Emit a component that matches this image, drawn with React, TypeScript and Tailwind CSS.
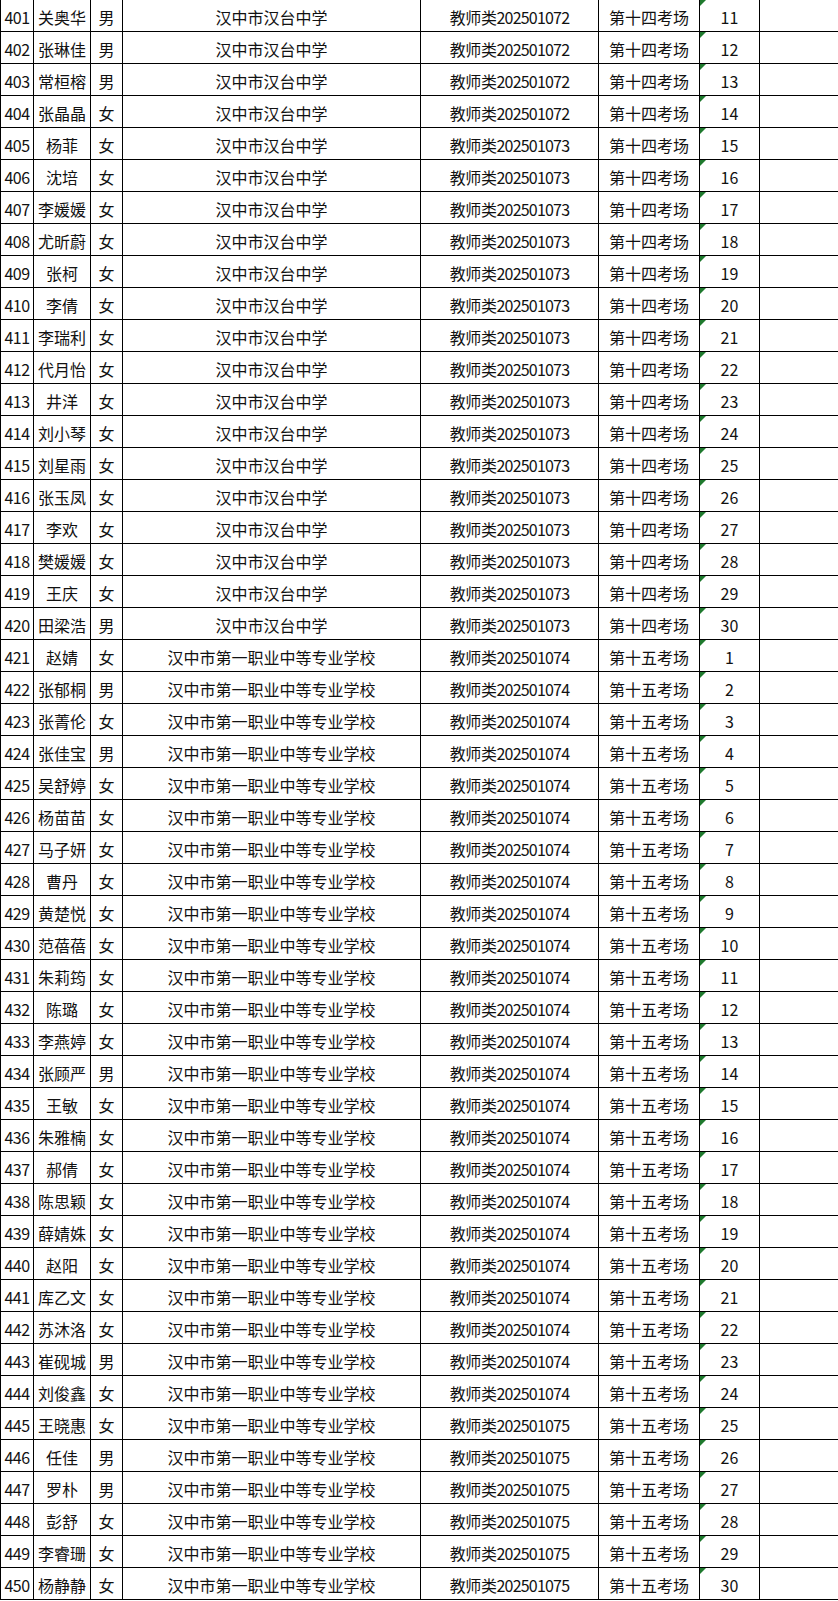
const rows: [string, string, number, string, number][] = [
  ['关奥华', '男', 72, 'A', 11],
  ['张琳佳', '男', 72, 'A', 12],
  ['常桓榕', '男', 72, 'A', 13],
  ['张晶晶', '女', 72, 'A', 14],
  ['杨菲', '女', 73, 'A', 15],
  ['沈培', '女', 73, 'A', 16],
  ['李媛媛', '女', 73, 'A', 17],
  ['尤昕蔚', '女', 73, 'A', 18],
  ['张柯', '女', 73, 'A', 19],
  ['李倩', '女', 73, 'A', 20],
  ['李瑞利', '女', 73, 'A', 21],
  ['代月怡', '女', 73, 'A', 22],
  ['井洋', '女', 73, 'A', 23],
  ['刘小琴', '女', 73, 'A', 24],
  ['刘星雨', '女', 73, 'A', 25],
  ['张玉凤', '女', 73, 'A', 26],
  ['李欢', '女', 73, 'A', 27],
  ['樊媛媛', '女', 73, 'A', 28],
  ['王庆', '女', 73, 'A', 29],
  ['田梁浩', '男', 73, 'A', 30],
  ['赵婧', '女', 74, 'B', 1],
  ['张郁桐', '男', 74, 'B', 2],
  ['张菁伦', '女', 74, 'B', 3],
  ['张佳宝', '男', 74, 'B', 4],
  ['吴舒婷', '女', 74, 'B', 5],
  ['杨苗苗', '女', 74, 'B', 6],
  ['马子妍', '女', 74, 'B', 7],
  ['曹丹', '女', 74, 'B', 8],
  ['黄楚悦', '女', 74, 'B', 9],
  ['范蓓蓓', '女', 74, 'B', 10],
  ['朱莉筠', '女', 74, 'B', 11],
  ['陈璐', '女', 74, 'B', 12],
  ['李燕婷', '女', 74, 'B', 13],
  ['张顾严', '男', 74, 'B', 14],
  ['王敏', '女', 74, 'B', 15],
  ['朱雅楠', '女', 74, 'B', 16],
  ['郝倩', '女', 74, 'B', 17],
  ['陈思颖', '女', 74, 'B', 18],
  ['薛婧姝', '女', 74, 'B', 19],
  ['赵阳', '女', 74, 'B', 20],
  ['库乙文', '女', 74, 'B', 21],
  ['苏沐洛', '女', 74, 'B', 22],
  ['崔砚城', '男', 74, 'B', 23],
  ['刘俊鑫', '女', 74, 'B', 24],
  ['王晓惠', '女', 75, 'B', 25],
  ['任佳', '男', 75, 'B', 26],
  ['罗朴', '男', 75, 'B', 27],
  ['彭舒', '女', 75, 'B', 28],
  ['李睿珊', '女', 75, 'B', 29],
  ['杨静静', '女', 75, 'B', 30],
];

const cell = 'flex items-center justify-center border-r border-b border-black pt-[2px] whitespace-nowrap';

export default function App() {
  return (
    <div
      className="w-[838px] h-[1601px] bg-white text-[16px] text-[#111] overflow-hidden"
      style={{ fontFamily: '"Noto Sans CJK SC", "Noto Sans", sans-serif' }}
    >
      <div className="border-l border-black">
        {rows.map(([name, sex, code, site, seat], i) => (
          <div
            key={i}
            className="grid grid-cols-[33px_57px_32px_298px_178px_101px_60px_1fr] h-[32px]"
          >
            <div className={`${cell} tracking-[-0.6px]`}>{401 + i}</div>
            <div className={cell}>{name}</div>
            <div className={cell}>{sex}</div>
            <div className={cell}>
              {site === 'A' ? '汉中市汉台中学' : '汉中市第一职业中等专业学校'}
            </div>
            <div className={`${cell} tracking-[-0.4px]`}>
              教师类<span className="tracking-[-0.8px]">2025010{code}</span>
            </div>
            <div className={cell}>{site === 'A' ? '第十四考场' : '第十五考场'}</div>
            <div className={`${cell} relative`}>
              <svg className="absolute left-0 top-0" width="6" height="6" viewBox="0 0 6 6">
                <polygon points="0,0 6,0 0,6" fill="#1f7a2e" />
              </svg>
              {seat}
            </div>
            <div className="border-b border-black" />
          </div>
        ))}
      </div>
    </div>
  );
}
